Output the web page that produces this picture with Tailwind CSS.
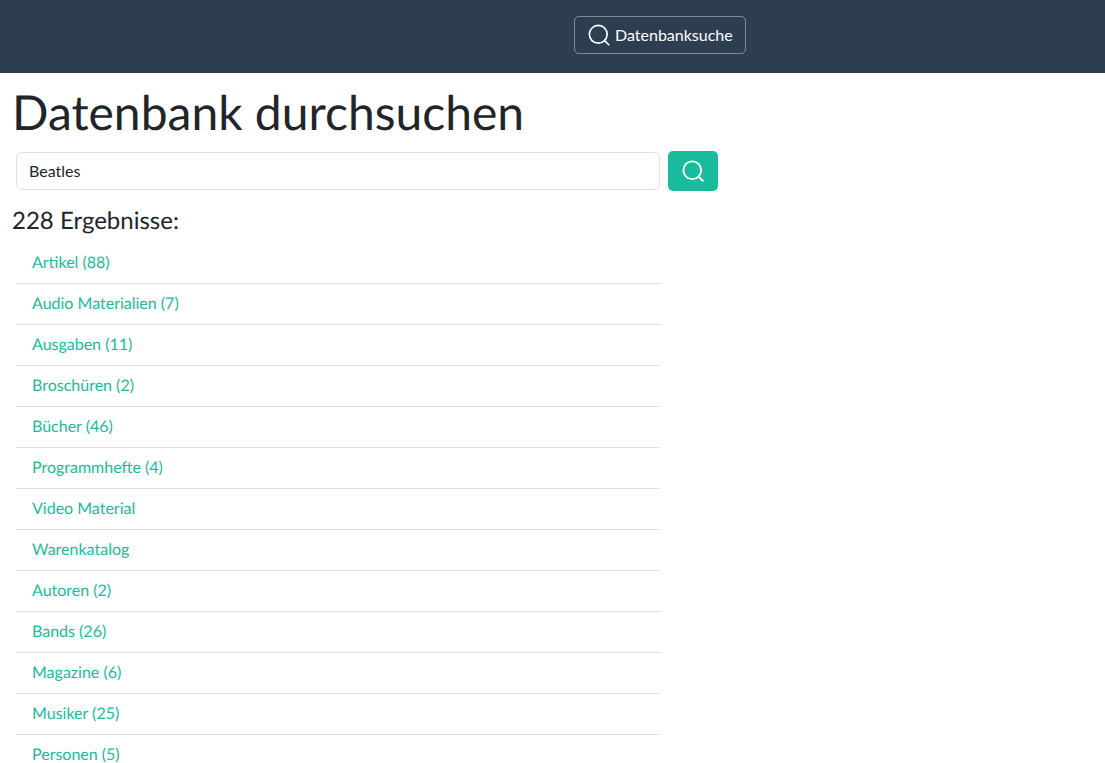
<!DOCTYPE html>
<html lang="de">
<head>
    <title>Datenbank durchsuchen</title>
    <meta name="viewport" content="width=device-width, initial-scale=1">
    <script src="https://cdn.jsdelivr.net/npm/@tailwindcss/browser@4"></script>
</head>
<body class="bg-white text-[#212529] font-['Lato',sans-serif] [text-rendering:geometricPrecision] h-[763px] overflow-hidden">
    <!-- Navbar -->
    <nav class="bg-[#2c3e50] h-[73px] pl-[574px] pt-4">
        <button class="h-[38px] w-[172px] flex items-center gap-[5px] pl-[13px] border border-white/40 rounded-[5px] text-white text-[16px]">
            <svg class="w-[22px] h-[22px]" viewBox="0 0 21 21" fill="none" stroke="currentColor" stroke-width="1.6" stroke-linecap="round">
                <circle cx="9.8" cy="9.8" r="8.5"/>
                <path d="M15.8 15.8L19.8 19.8"/>
            </svg>
            Datenbanksuche
        </button>
    </nav>

    <div class="pl-3">
        <h1 class="text-[48px] leading-[58px] pt-[11px] h-[78px]">Datenbank durchsuchen</h1>
        <form class="flex items-center pl-1 gap-2 h-[40px]">
            <input type="text" value="Beatles" class="w-[644px] h-[38px] pl-[12px] pb-[2px] border border-[#dee2e6] rounded-[6px] text-[16px] text-[#212529]">
            <button type="button" class="w-[50px] h-[40px] pr-[1px] flex items-center justify-center bg-[#18bc9c] rounded-[5px] text-white">
                <svg class="w-[22px] h-[22px]" viewBox="0 0 21 21" fill="none" stroke="currentColor" stroke-width="1.8" stroke-linecap="round">
                    <circle cx="9.8" cy="9.8" r="8.5"/>
                    <path d="M15.8 15.8L19.8 19.8"/>
                </svg>
            </button>
        </form>
        <h4 class="text-[24px] leading-[29px] mt-[15px] mb-[8px]">228 Ergebnisse:</h4>
    </div>

    <ul class="ml-4 w-[644px] text-[16px] text-[#18bc9c]">
        <li class="h-[41px] pl-4 pt-2 leading-6 border-b border-[#dee2e6]"><a href="#">Artikel (88)</a></li>
        <li class="h-[41px] pl-4 pt-2 leading-6 border-b border-[#dee2e6]"><a href="#">Audio Materialien (7)</a></li>
        <li class="h-[41px] pl-4 pt-2 leading-6 border-b border-[#dee2e6]"><a href="#">Ausgaben (11)</a></li>
        <li class="h-[41px] pl-4 pt-2 leading-6 border-b border-[#dee2e6]"><a href="#">Broschüren (2)</a></li>
        <li class="h-[41px] pl-4 pt-2 leading-6 border-b border-[#dee2e6]"><a href="#">Bücher (46)</a></li>
        <li class="h-[41px] pl-4 pt-2 leading-6 border-b border-[#dee2e6]"><a href="#">Programmhefte (4)</a></li>
        <li class="h-[41px] pl-4 pt-2 leading-6 border-b border-[#dee2e6]"><a href="#">Video Material</a></li>
        <li class="h-[41px] pl-4 pt-2 leading-6 border-b border-[#dee2e6]"><a href="#">Warenkatalog</a></li>
        <li class="h-[41px] pl-4 pt-2 leading-6 border-b border-[#dee2e6]"><a href="#">Autoren (2)</a></li>
        <li class="h-[41px] pl-4 pt-2 leading-6 border-b border-[#dee2e6]"><a href="#">Bands (26)</a></li>
        <li class="h-[41px] pl-4 pt-2 leading-6 border-b border-[#dee2e6]"><a href="#">Magazine (6)</a></li>
        <li class="h-[41px] pl-4 pt-2 leading-6 border-b border-[#dee2e6]"><a href="#">Musiker (25)</a></li>
        <li class="h-[41px] pl-4 pt-2 leading-6 border-b border-[#dee2e6]"><a href="#">Personen (5)</a></li>
    </ul>
</body>
</html>
